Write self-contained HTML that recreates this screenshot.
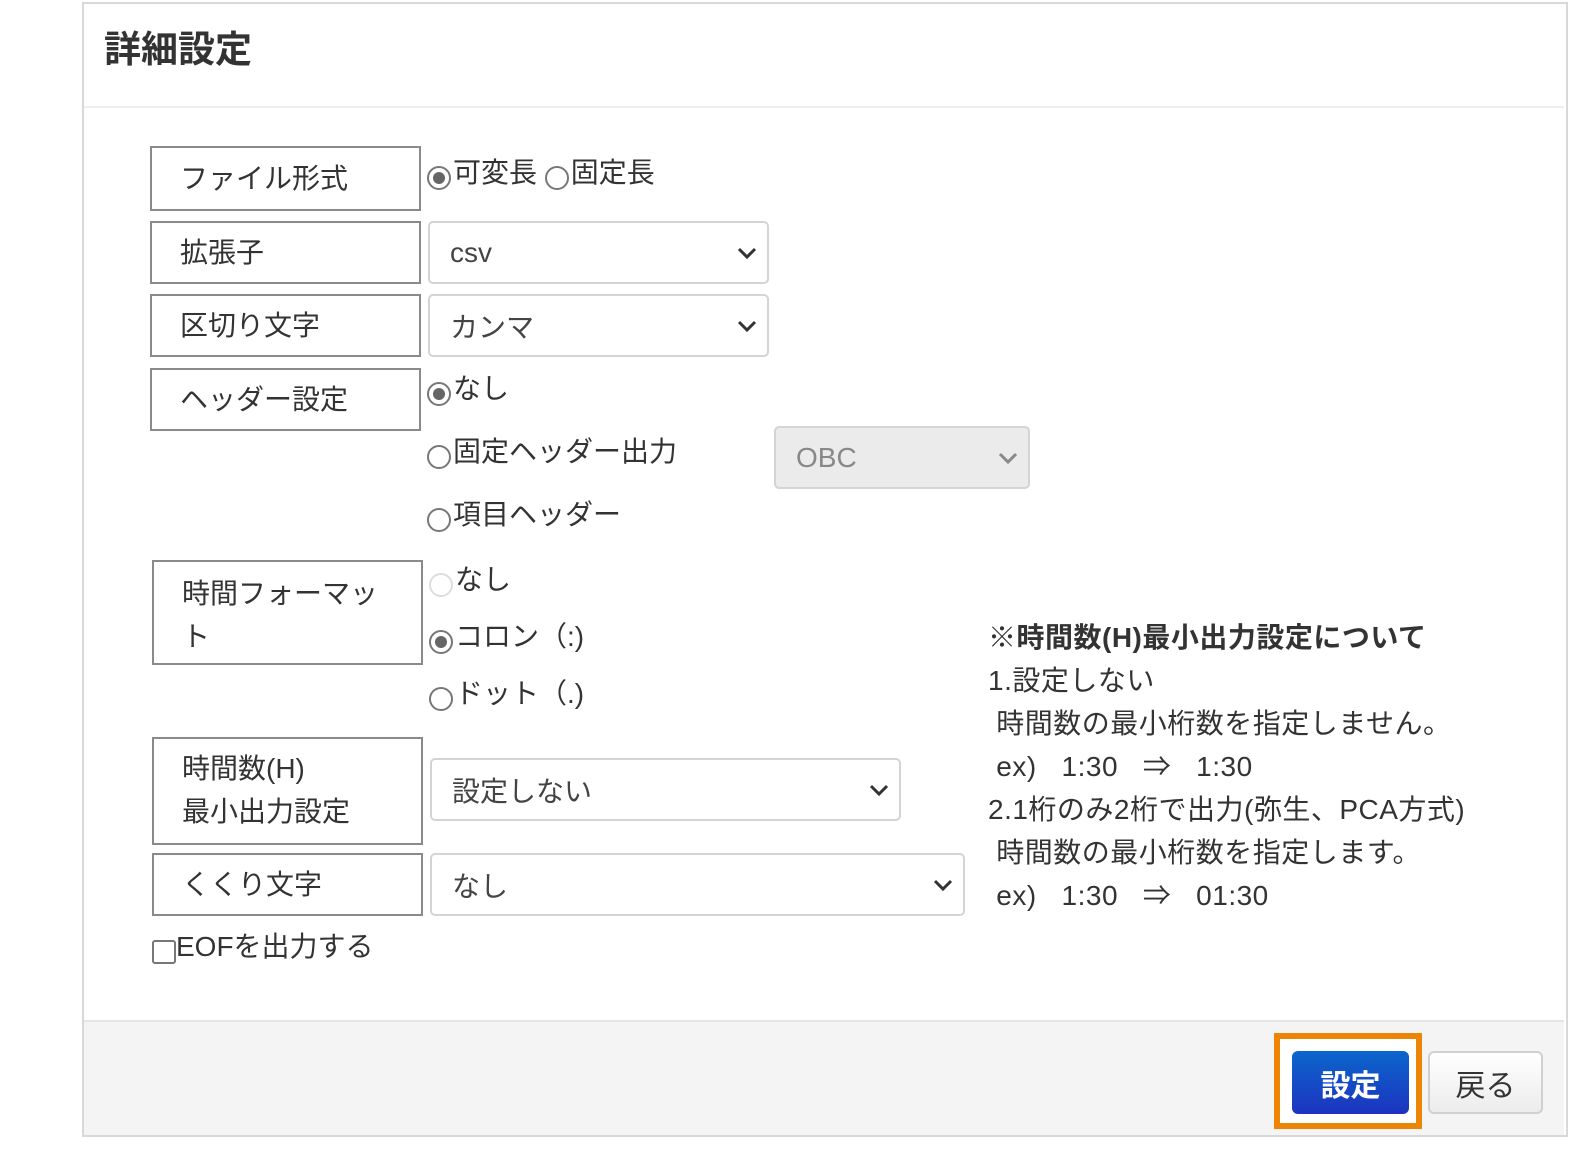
<!DOCTYPE html>
<html><head><meta charset="utf-8"><style>
body{margin:0;width:1596px;height:1165px;background:#fff;position:relative;overflow:hidden;font-family:"Liberation Sans","Noto Sans CJK JP",sans-serif;color:#333}
.a{position:absolute}
.frame{left:82px;top:2px;width:1482px;height:1131px;border:2px solid #d8d8d8;box-sizing:content-box}
.lab{position:absolute;border:2px solid #8a8a8a;box-sizing:border-box;font-size:28px;padding-left:28px;color:#333;display:flex;align-items:center;line-height:43px}
.sel{position:absolute;border:2px solid #d4d4d4;border-radius:5px;box-sizing:border-box;font-size:28px;padding-left:20px;display:flex;align-items:center;color:#444}
.sel svg{position:absolute;right:10px;top:50%;margin-top:-7px}
.r{position:absolute;font-size:28px;line-height:34px;white-space:nowrap}
.rc{display:inline-block;width:24px;height:24px;border:2px solid #777;border-radius:50%;box-sizing:border-box;vertical-align:-8px;margin-right:2px;position:relative}
.rc.on::after{content:"";position:absolute;left:4px;top:4px;width:12px;height:12px;border-radius:50%;background:#666}
.note{left:988px;top:616px;font-size:28px;line-height:43px;color:#333;white-space:pre;letter-spacing:0.5px}
</style></head><body>
<div class="a frame"></div>
<div class="a" style="left:104px;top:19px;font-size:37px;font-weight:bold;color:#333">詳細設定</div>
<div class="a" style="left:84px;top:106px;width:1480px;height:2px;background:#eee"></div>

<div class="lab" style="left:150px;top:146px;width:271px;height:65px">ファイル形式</div>
<div class="lab" style="left:150px;top:221px;width:271px;height:63px">拡張子</div>
<div class="lab" style="left:150px;top:294px;width:271px;height:63px">区切り文字</div>
<div class="lab" style="left:150px;top:368px;width:271px;height:63px">ヘッダー設定</div>
<div class="lab" style="left:152px;top:560px;width:271px;height:105px;align-items:flex-start;padding-top:10px">時間フォーマッ<br>ト</div>
<div class="lab" style="left:152px;top:737px;width:271px;height:108px;align-items:flex-start;padding-top:8px">時間数(H)<br>最小出力設定</div>
<div class="lab" style="left:152px;top:853px;width:271px;height:63px">くくり文字</div>

<div class="r" style="left:427px;top:156px"><span class="rc on"></span>可変長 <span class="rc"></span>固定長</div>
<div class="r" style="left:427px;top:372px"><span class="rc on"></span>なし</div>
<div class="r" style="left:427px;top:435px"><span class="rc"></span>固定ヘッダー出力</div>
<div class="r" style="left:427px;top:498px"><span class="rc"></span>項目ヘッダー</div>
<div class="r" style="left:429px;top:563px"><span class="rc" style="border-color:#ddd"></span>なし</div>
<div class="r" style="left:429px;top:620px"><span class="rc on"></span>コロン（:)</div>
<div class="r" style="left:429px;top:677px"><span class="rc"></span>ドット（.)</div>

<div class="sel" style="left:428px;top:221px;width:341px;height:63px">csv<svg width="20" height="14"><path d="M2 3l8 8 8-8" stroke="#333" stroke-width="3" fill="none"/></svg></div>
<div class="sel" style="left:428px;top:294px;width:341px;height:63px">カンマ<svg width="20" height="14"><path d="M2 3l8 8 8-8" stroke="#333" stroke-width="3" fill="none"/></svg></div>
<div class="sel" style="left:774px;top:426px;width:256px;height:63px;background:#ebebeb;color:#888">OBC<svg width="20" height="14"><path d="M2 3l8 8 8-8" stroke="#888" stroke-width="3" fill="none"/></svg></div>
<div class="sel" style="left:430px;top:758px;width:471px;height:63px">設定しない<svg width="20" height="14"><path d="M2 3l8 8 8-8" stroke="#333" stroke-width="3" fill="none"/></svg></div>
<div class="sel" style="left:430px;top:853px;width:535px;height:63px">なし<svg width="20" height="14"><path d="M2 3l8 8 8-8" stroke="#333" stroke-width="3" fill="none"/></svg></div>

<div class="r" style="left:152px;top:930px"><span style="display:inline-block;width:24px;height:24px;border:2px solid #777;border-radius:3px;box-sizing:border-box;vertical-align:-8px"></span>EOFを出力する</div>

<div class="a note"><b>※時間数(H)最小出力設定について</b>
1.設定しない
 時間数の最小桁数を指定しません。
 ex)   1:30   ⇒   1:30
2.1桁のみ2桁で出力(弥生、PCA方式)
 時間数の最小桁数を指定します。
 ex)   1:30   ⇒   01:30</div>

<div class="a" style="left:84px;top:1020px;width:1480px;height:113px;background:#f4f4f4;border-top:2px solid #e4e4e4"></div>
<div class="a" style="left:1274px;top:1033px;width:148px;height:96px;border:6px solid #ec8505;box-sizing:border-box;background:#fff"></div>
<div class="a" style="left:1292px;top:1051px;width:117px;height:63px;border-radius:6px;background:linear-gradient(#0b66cc,#1d33c0);color:#fff;font-size:30px;font-weight:bold;display:flex;align-items:center;justify-content:center">設定</div>
<div class="a" style="left:1428px;top:1051px;width:115px;height:63px;border-radius:6px;border:2px solid #d0d0d0;box-sizing:border-box;background:linear-gradient(#fff,#ececec);color:#333;font-size:30px;display:flex;align-items:center;justify-content:center">戻る</div>
</body></html>
